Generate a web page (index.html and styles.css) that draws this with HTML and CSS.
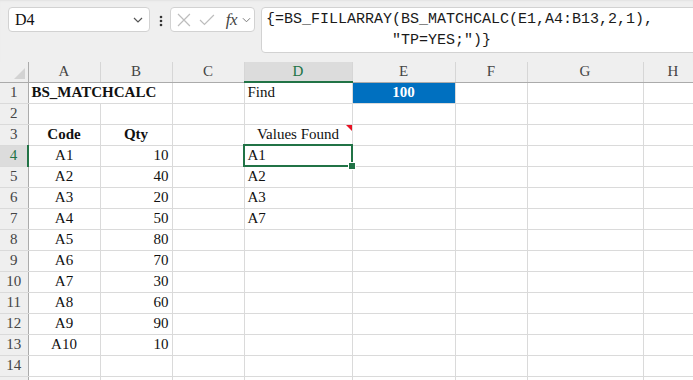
FILE: index.html
```html
<!DOCTYPE html>
<html lang="en">
<head>
  <meta charset="UTF-8">
  <title>BS_MATCHCALC</title>
  <link rel="stylesheet" href="styles.css">
</head>
<body>
  <div class="toolbar">
    <div class="namebox">
      <span>D4</span>
      <svg class="chev" width="10" height="6" viewBox="0 0 10 6"><path d="M1 1l4 4 4-4" fill="none" stroke="#555" stroke-width="1.2"/></svg>
    </div>
    <svg class="dots" width="4" height="12" viewBox="0 0 4 12"><circle cx="2" cy="2" r="1.3"/><circle cx="2" cy="6" r="1.3"/><circle cx="2" cy="10" r="1.3"/></svg>
    <div class="fxbox">
      <svg width="14" height="14" viewBox="0 0 14 14"><path d="M1 1l12 12M13 1L1 13" stroke="#bdbdbd" stroke-width="1.2"/></svg>
      <svg width="16" height="12" viewBox="0 0 16 12"><path d="M1 6l4.5 4.5L15 1" fill="none" stroke="#bdbdbd" stroke-width="1.2"/></svg>
      <span class="fx">fx</span>
      <svg class="chev" width="9" height="6" viewBox="0 0 10 6"><path d="M1 1l4 4 4-4" fill="none" stroke="#777" stroke-width="1.1"/></svg>
    </div>
    <div class="formula">{=BS_FILLARRAY(BS_MATCHCALC(E1,A4:B13,2,1),
              "TP=YES;")}</div>
  </div>

  <table class="sheet">
    <colgroup>
      <col class="c-rh"><col class="c-a"><col class="c-b"><col class="c-c"><col class="c-d"><col class="c-e"><col class="c-f"><col class="c-g"><col class="c-h">
    </colgroup>
    <tr class="head">
      <th class="corner"><span class="tri"></span></th>
      <th>A</th><th>B</th><th>C</th><th class="sel">D</th><th>E</th><th>F</th><th>G</th><th>H</th>
    </tr>
    <tr><th>1</th><td colspan="2" class="b">BS_MATCHCALC</td><td></td><td>Find</td><td class="fill b ctr">100</td><td></td><td></td><td></td></tr>
    <tr><th>2</th><td></td><td></td><td></td><td></td><td></td><td></td><td></td><td></td></tr>
    <tr><th>3</th><td class="b ctr">Code</td><td class="b ctr">Qty</td><td></td><td class="ctr note">Values Found</td><td></td><td></td><td></td><td></td></tr>
    <tr><th class="sel">4</th><td class="ctr">A1</td><td class="num">10</td><td></td><td class="active">A1</td><td></td><td></td><td></td><td></td></tr>
    <tr><th>5</th><td class="ctr">A2</td><td class="num">40</td><td></td><td>A2</td><td></td><td></td><td></td><td></td></tr>
    <tr><th>6</th><td class="ctr">A3</td><td class="num">20</td><td></td><td>A3</td><td></td><td></td><td></td><td></td></tr>
    <tr><th>7</th><td class="ctr">A4</td><td class="num">50</td><td></td><td>A7</td><td></td><td></td><td></td><td></td></tr>
    <tr><th>8</th><td class="ctr">A5</td><td class="num">80</td><td></td><td></td><td></td><td></td><td></td><td></td></tr>
    <tr><th>9</th><td class="ctr">A6</td><td class="num">70</td><td></td><td></td><td></td><td></td><td></td><td></td></tr>
    <tr><th>10</th><td class="ctr">A7</td><td class="num">30</td><td></td><td></td><td></td><td></td><td></td><td></td></tr>
    <tr><th>11</th><td class="ctr">A8</td><td class="num">60</td><td></td><td></td><td></td><td></td><td></td><td></td></tr>
    <tr><th>12</th><td class="ctr">A9</td><td class="num">90</td><td></td><td></td><td></td><td></td><td></td><td></td></tr>
    <tr><th>13</th><td class="ctr">A10</td><td class="num">10</td><td></td><td></td><td></td><td></td><td></td><td></td></tr>
    <tr><th>14</th><td></td><td></td><td></td><td></td><td></td><td></td><td></td><td></td></tr>
    <tr><th></th><td></td><td></td><td></td><td></td><td></td><td></td><td></td><td></td></tr>
  </table>
</body>
</html>
```

FILE: styles.css
```css
:root {
  --chrome: #efefef;
  --grid: #dadada;
  --head-line: #ababab;
  --green: #217346;
  --text: #111;
}

body {
  margin: 0;
  width: 693px;
  height: 380px;
  overflow: hidden;
  background: #fff;
  color: var(--text);
  font-family: "Liberation Serif", "Times New Roman", serif;
}

/* Formula bar */
.toolbar {
  display: flex;
  align-items: flex-start;
  height: 62px;
  box-sizing: border-box;
  padding: 7px 0 0 8px;
  background: var(--chrome);
  box-shadow: inset 0 2px 2px -1px #e2e2e2;
}

.namebox {
  display: flex;
  align-items: center;
  justify-content: space-between;
  width: 142px;
  height: 25px;
  box-sizing: border-box;
  padding: 0 6px 0 6px;
  background: #fff;
  border: 1px solid #d2d2d2;
  border-radius: 4px;
  font-size: 16px;
}

.dots {
  margin: 8px 7px 0 9px;
  fill: #333;
}

.fxbox {
  display: flex;
  align-items: center;
  gap: 8px;
  width: 85px;
  height: 25px;
  box-sizing: border-box;
  padding: 0 3px 0 6px;
  background: #fff;
  border: 1px solid #d2d2d2;
  border-radius: 4px;
}

.fxbox .fx {
  font-style: italic;
  font-size: 17px;
  color: #444;
  margin-left: 3px;
  margin-right: -3px;
  letter-spacing: -0.5px;
}

.formula {
  flex: 1;
  height: 46px;
  box-sizing: border-box;
  margin: 0 -12px 0 6px;
  padding: 1px 4px;
  background: #fff;
  border: 1px solid #d2d2d2;
  border-radius: 4px;
  font-family: "Liberation Mono", "DejaVu Sans Mono", monospace;
  font-size: 15px;
  line-height: 21px;
  white-space: pre;
  color: #1a1a1a;
}

/* Grid */
.sheet {
  border-collapse: collapse;
  table-layout: fixed;
  width: 703px;
  font-size: 15px;
}

.c-rh { width: 28px; }
.c-a, .c-b, .c-c, .c-f { width: 72px; }
.c-d { width: 108px; }
.c-e { width: 103px; }
.c-g { width: 116px; }
.c-h { width: 60px; }

.sheet tr { height: 21px; }
.sheet tr.head { height: 20px; }

.sheet th {
  background: var(--chrome);
  font-weight: normal;
  color: #444;
  padding: 0;
  text-align: center;
  border-right: 1px solid var(--head-line);
  border-bottom: 1px solid var(--grid);
}

.sheet .head th {
  border-right: 1px solid #d6d6d6;
  border-bottom: 1px solid var(--head-line);
}

.sheet .head th.corner {
  position: relative;
  border-right: 1px solid var(--head-line);
}

.tri {
  position: absolute;
  right: 3px;
  bottom: 3px;
  width: 0;
  height: 0;
  border-left: 11px solid transparent;
  border-bottom: 11px solid #d3d3d3;
}

.sheet th.sel {
  background: #dcdcdc;
  color: var(--green);
}

.sheet .head th.sel { border-bottom: 2px solid var(--green); }
.sheet tr th.sel:first-child { border-right: 2px solid var(--green); }

.sheet td {
  padding: 0 3px;
  border-right: 1px solid var(--grid);
  border-bottom: 1px solid var(--grid);
  white-space: nowrap;
  overflow: visible;
}

.b { font-weight: bold; }
.ctr { text-align: center; }
.num { text-align: right; }

.fill {
  background: #0070c0;
  color: #fff;
}

.note { position: relative; }

.note::after {
  content: "";
  position: absolute;
  top: 0;
  right: 0;
  border-top: 6px solid #e81123;
  border-left: 6px solid transparent;
}

.active {
  position: relative;
  outline: 2px solid var(--green);
  outline-offset: -1px;
}

.active::after {
  content: "";
  position: absolute;
  right: -3px;
  bottom: -3px;
  width: 6px;
  height: 6px;
  background: var(--green);
  box-shadow: 0 0 0 1px #fff;
}
```
